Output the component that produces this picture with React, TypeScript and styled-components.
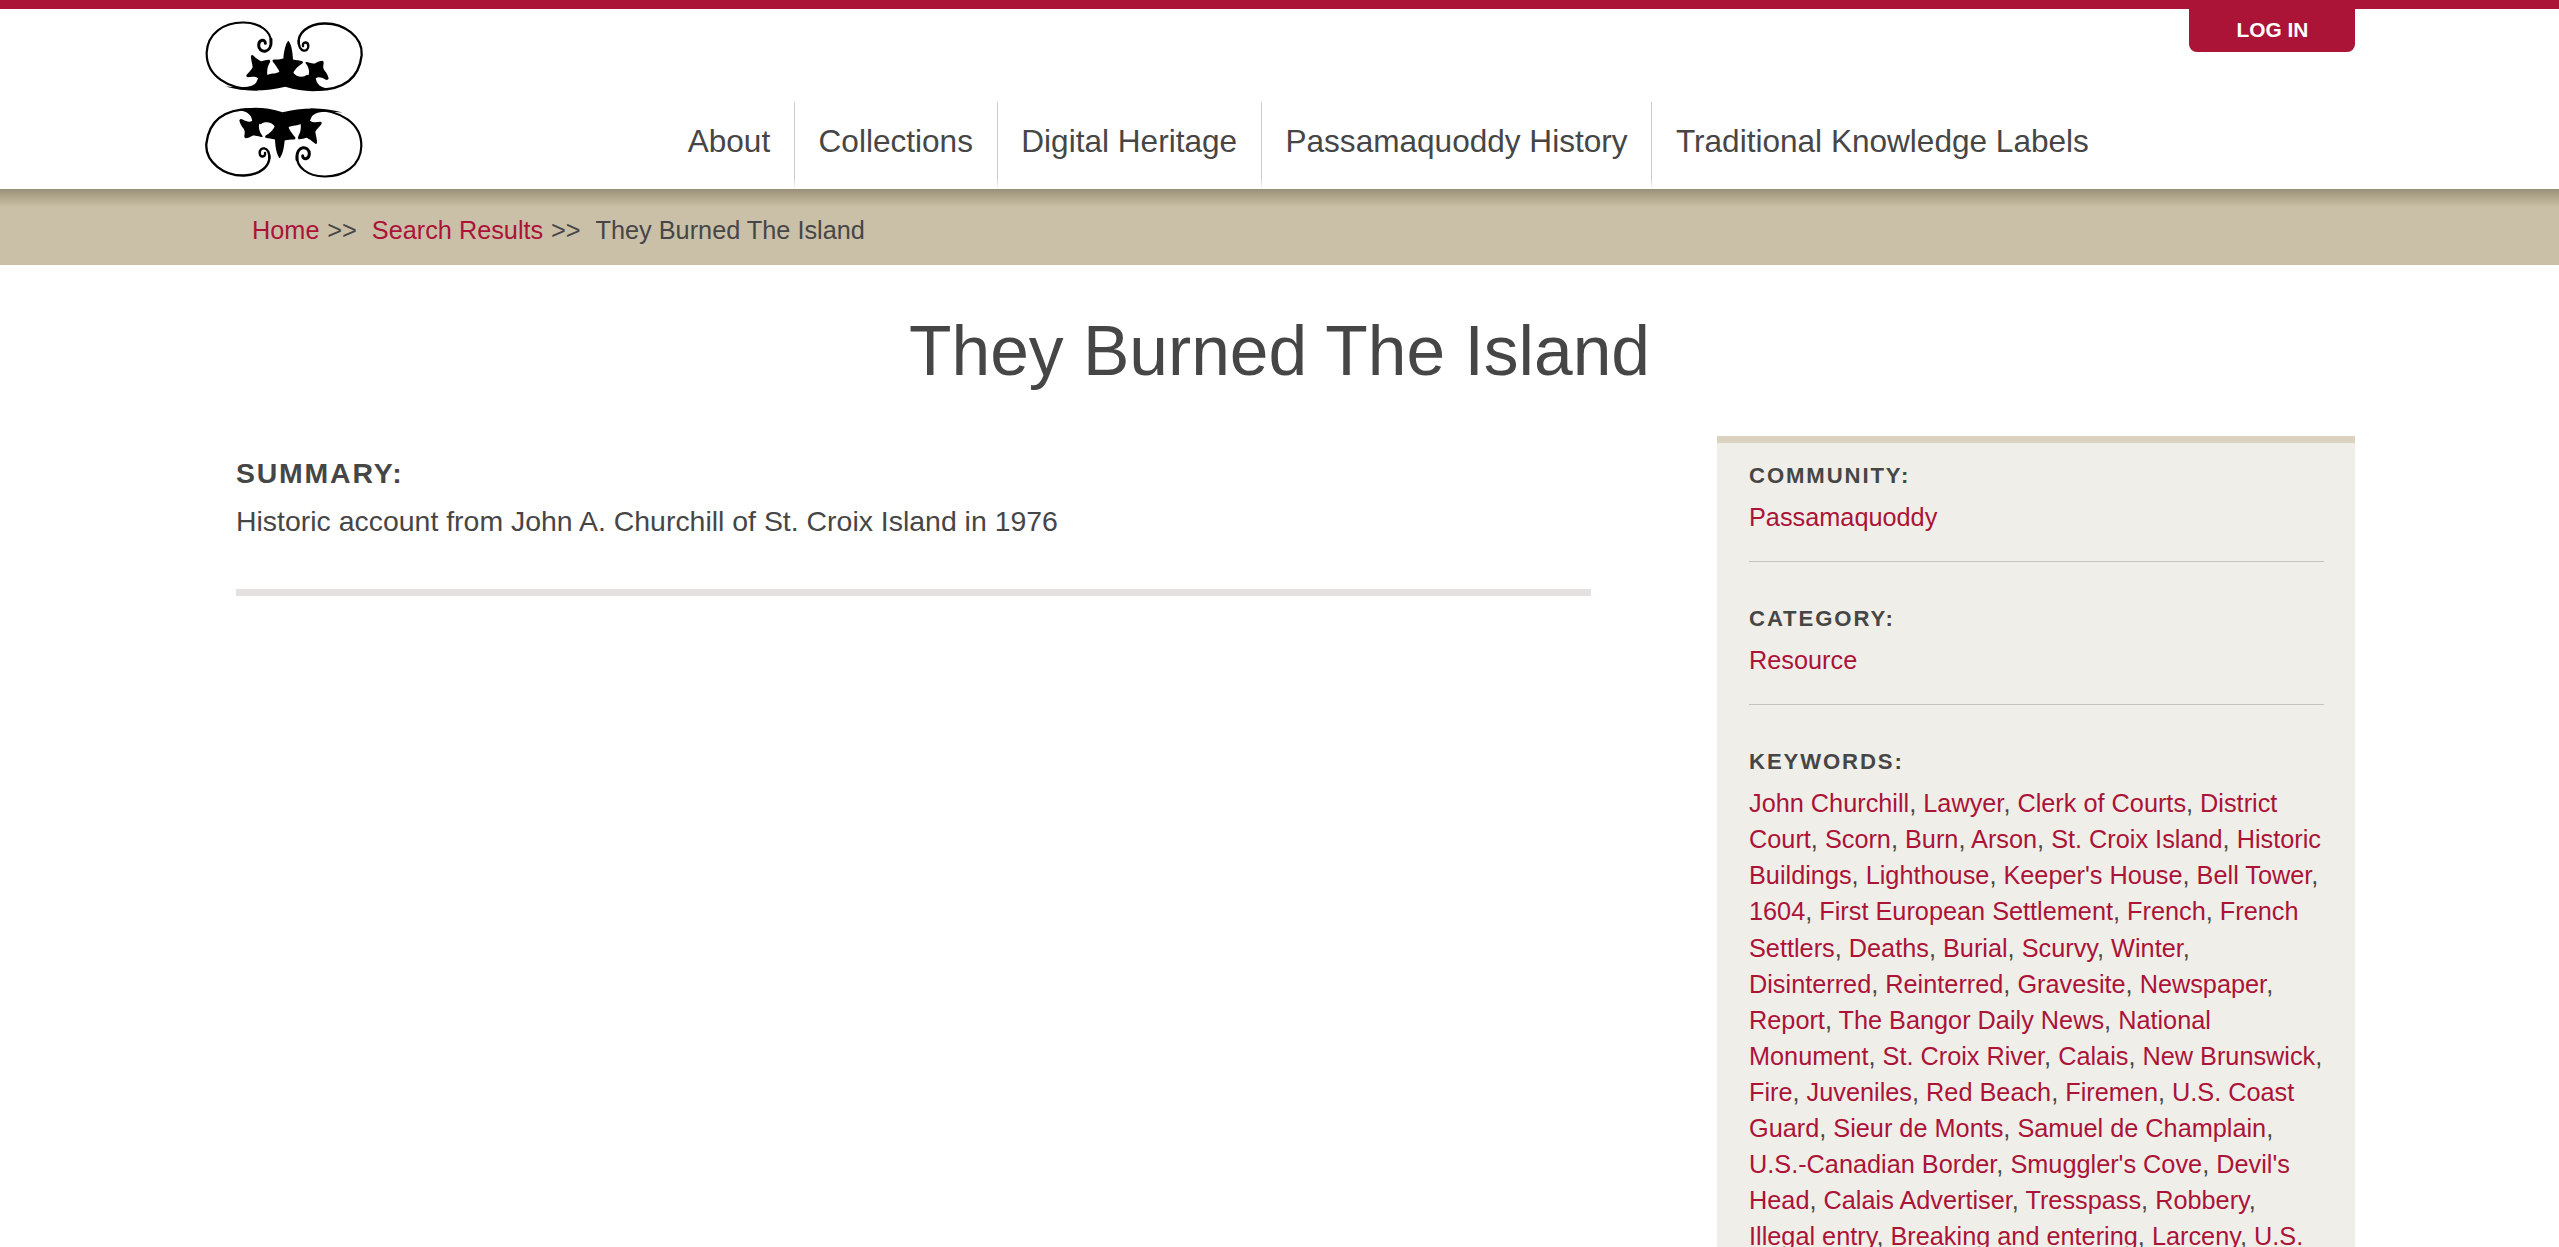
import React from "react";
import styled, { createGlobalStyle } from "styled-components";

const RED = "#ab1337";
const TEXT = "#464646";

const GlobalStyle = createGlobalStyle`
  html { font-size: 31.62px; }
  body {
    margin: 0;
    height: 100vh;
    overflow: hidden;
    background: #fff;
    color: ${TEXT};
    font-family: "Liberation Sans", Arial, sans-serif;
    font-size: 0.8rem;
    line-height: 1.428;
  }
`;

const Page = styled.div`
  display: flex;
  flex-direction: column;
  height: 100vh;
  overflow: hidden;
`;

const Header = styled.header`
  box-sizing: border-box;
  display: flex;
  flex-shrink: 0;
  align-items: flex-start;
  height: 189px;
  padding: 0 204px;
  border-top: 9px solid ${RED};
`;

const LogoLink = styled.a`
  display: block;
  margin-top: 11px;
  line-height: 0;
`;

const LogoSvg = styled.svg`
  display: block;
  width: 160px;
  height: 160px;
`;

const Nav = styled.nav`
  display: flex;
  flex-grow: 1;
  margin: 93px 0 0 300px;
`;

const NavItem = styled.a`
  height: 86px;
  padding: 0 23.7px;
  border-right: 1px solid;
  border-image: linear-gradient(to bottom, #cbcbcb 88%, #fff) 1;
  color: ${TEXT};
  font-size: 31.57px;
  line-height: 79px;
  white-space: nowrap;
  text-decoration: none;

  &:last-child { border-right: 0; }
`;

const LoginButton = styled.a`
  box-sizing: border-box;
  flex-shrink: 0;
  width: 166px;
  height: 43px;
  padding-left: 1px;
  border-radius: 0 0 8px 8px;
  background: ${RED};
  color: #fff;
  font-size: 0.66rem;
  font-weight: bold;
  line-height: 41px;
  text-align: center;
  text-decoration: none;
`;

const Breadcrumb = styled.nav`
  box-sizing: border-box;
  display: flex;
  flex-shrink: 0;
  align-items: center;
  height: 76px;
  padding: 6px 252px 0;
  background: linear-gradient(to bottom, #989079, #b2a98e 9px, #cac0a8 18px);
  white-space: nowrap;
`;

const Separator = styled.span`
  margin: 0 15px 0 7.8px;
`;

const TextLink = styled.a`
  color: ${RED};
  text-decoration: none;
`;

const Title = styled.h1`
  flex-shrink: 0;
  margin: 36px 0 35px;
  font-size: 2.2rem;
  font-weight: normal;
  line-height: 100px;
  text-align: center;
`;

const Content = styled.main`
  display: flex;
  flex: 1;
  justify-content: space-between;
  min-height: 0;
  padding: 0 204px 0 236px;
`;

const Article = styled.article`
  width: 1355px;
  padding-top: 16.7px;
`;

const Summary = styled.section`
  padding-bottom: 47.5px;
  border-bottom: 7px solid #e4e1e0;
  font-size: 0.9rem;
`;

const Heading = styled.h2<{ $size: string; $spacing: string }>`
  margin: 0 0 7.8px;
  font-size: ${(p) => p.$size};
  letter-spacing: ${(p) => p.$spacing};
  text-transform: uppercase;
`;

const Paragraph = styled.p`
  margin: 0;
`;

const Sidebar = styled.aside`
  box-sizing: border-box;
  width: 638px;
  padding: 16.73px 31px 0 32px;
  border-top: 7px solid #dad3c0;
  background: #efeee9;
`;

const Field = styled.section`
  margin-bottom: 41px;
  padding-bottom: 25.5px;
  border-bottom: 1px solid #c3c3be;
`;

const LOOPS = [
  { d: "M200 268C110 268 48 225 49 158C51 100 100 66 160 67C210 68 245 95 242 130", w: 6.5 },
  { d: "M242 118C246 164 204 160 205 135C206 117 225 116 225 129", w: 9 },
  { d: "M380 269C450 269 505 245 514 165C518 110 460 68 400 70C350 72 322 100 325 130", w: 7 },
  { d: "M325 122C325 160 355 157 354 137C353 123 335 124 338 138", w: 7 },
];

const SHAPES = [
  "M105 259C155 263 188 262 198 246L207 226L232 224C246 218 258 222 268 214L308 216C318 232 340 233 350 224L376 232C378 250 388 264 420 266C380 277 335 275 285 260C235 272 170 278 105 259Z",
  "M294 122C302 130 307 152 308 178C318 180 328 181 336 183Q340 186 336 190C322 198 312 208 306 224L270 224C268 210 256 196 247 184Q245 179 250 178C260 178 270 178 279 175C281 152 286 130 294 122Z",
  "M182 167Q185 162 191 168C199 175 206 180 213 183C222 181 230 178 237 179Q242 182 238 188C233 197 229 207 231 226L205 236C194 227 182 230 172 231Q166 230 169 224C175 216 183 210 187 201C186 189 181 178 182 167Z",
  "M345 188Q346 184 352 186C361 188 368 190 374 190C382 185 390 182 396 182Q401 183 400 190C398 198 398 204 402 210C409 218 414 228 415 236Q412 241 405 238C394 232 385 229 376 234L350 232C360 223 358 204 345 188Z",
];

function Ornament({ transform }: { transform?: string }) {
  return (
    <g transform={transform}>
      {LOOPS.map((l) => (
        <path key={l.d} d={l.d} fill="none" stroke="#000" strokeWidth={l.w} strokeLinecap="round" />
      ))}
      {SHAPES.map((d) => (
        <path key={d} d={d} />
      ))}
    </g>
  );
}

function Logo() {
  return (
    <LogoSvg viewBox="41 59.5 480 480" role="img">
      <Ornament />
      <Ornament transform="rotate(180 281 298)" />
    </LogoSvg>
  );
}

const NAV = ["About", "Collections", "Digital Heritage", "Passamaquoddy History", "Traditional Knowledge Labels"];

const KEYWORDS = [
  "John Churchill", "Lawyer", "Clerk of Courts", "District Court", "Scorn", "Burn", "Arson",
  "St. Croix Island", "Historic Buildings", "Lighthouse", "Keeper's House", "Bell Tower", "1604",
  "First European Settlement", "French", "French Settlers", "Deaths", "Burial", "Scurvy", "Winter",
  "Disinterred", "Reinterred", "Gravesite", "Newspaper", "Report", "The Bangor Daily News",
  "National Monument", "St. Croix River", "Calais", "New Brunswick", "Fire", "Juveniles",
  "Red Beach", "Firemen", "U.S. Coast Guard", "Sieur de Monts", "Samuel de Champlain",
  "U.S.-Canadian Border", "Smuggler's Cove", "Devil's Head", "Calais Advertiser", "Tresspass",
  "Robbery", "Illegal entry", "Breaking and entering", "Larceny", "U.S.",
];

const FIELDS = [
  { label: "Community:", values: ["Passamaquoddy"] },
  { label: "Category:", values: ["Resource"] },
  { label: "Keywords:", values: KEYWORDS },
];

export default function App() {
  return (
    <Page>
      <GlobalStyle />
      <Header>
        <LogoLink href="#"><Logo /></LogoLink>
        <Nav>
          {NAV.map((item) => <NavItem key={item} href="#">{item}</NavItem>)}
        </Nav>
        <LoginButton href="#">LOG IN</LoginButton>
      </Header>
      <Breadcrumb>
        <TextLink href="#">Home</TextLink>
        <Separator>&gt;&gt;</Separator>
        <TextLink href="#">Search Results</TextLink>
        <Separator>&gt;&gt;</Separator>
        <span>They Burned The Island</span>
      </Breadcrumb>
      <Title>They Burned The Island</Title>
      <Content>
        <Article>
          <Summary>
            <Heading $size="0.9rem" $spacing="1.8px">Summary:</Heading>
            <Paragraph>Historic account from John A. Churchill of St. Croix Island in 1976</Paragraph>
          </Summary>
        </Article>
        <Sidebar>
          {FIELDS.map((field) => (
            <Field key={field.label}>
              <Heading $size="0.7rem" $spacing="1.9px">{field.label}</Heading>
              <Paragraph>
                {field.values.map((value, i) => (
                  <React.Fragment key={value}>
                    {i > 0 && ", "}
                    <TextLink href="#">{value}</TextLink>
                  </React.Fragment>
                ))}
              </Paragraph>
            </Field>
          ))}
        </Sidebar>
      </Content>
    </Page>
  );
}
